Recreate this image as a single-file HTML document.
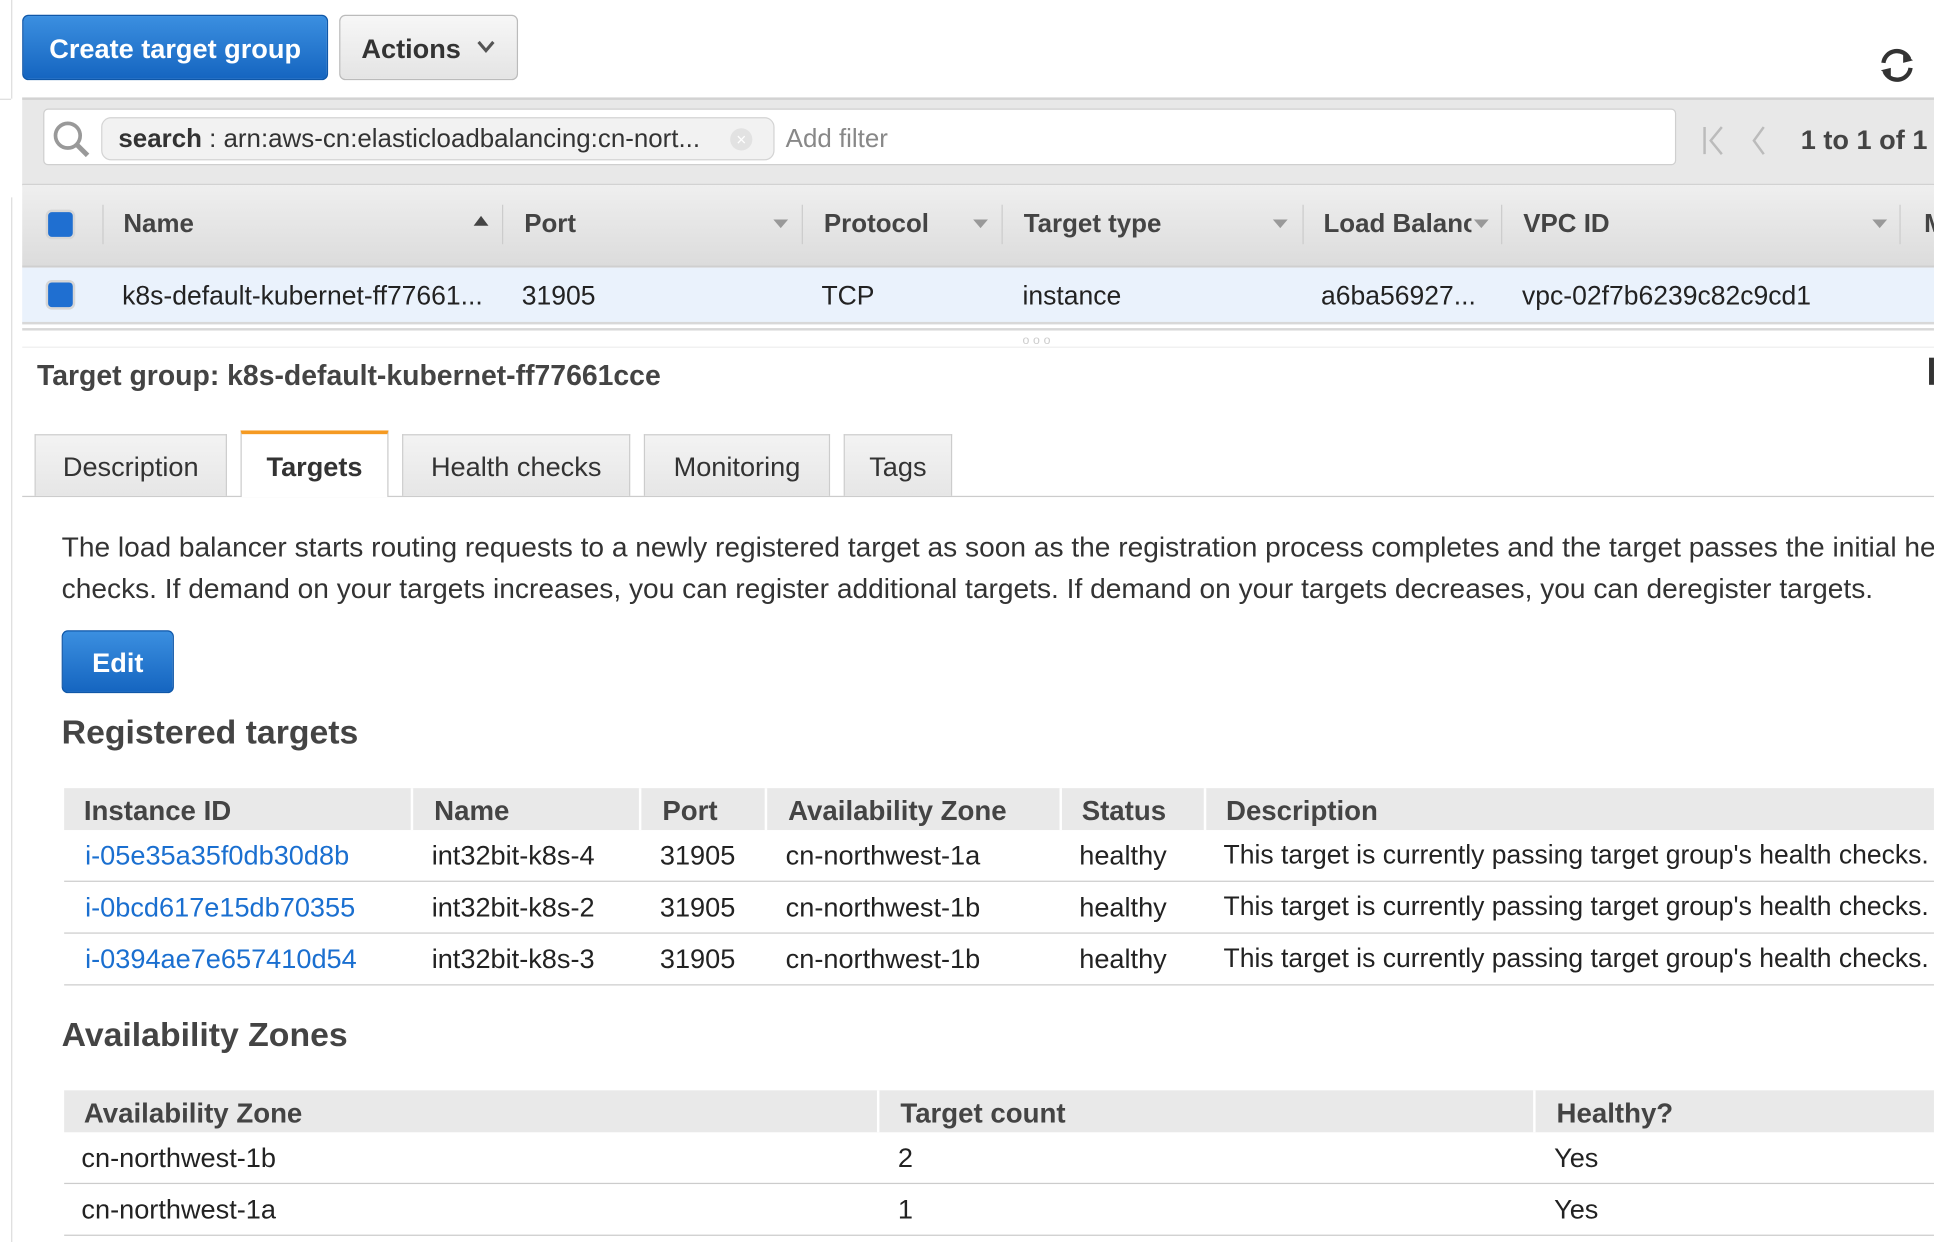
<!DOCTYPE html>
<html><head><meta charset="utf-8">
<style>
html,body{margin:0;padding:0;background:#fff;overflow:hidden;}
body{width:1934px;height:1242px;}
#w{position:absolute;left:0;top:0;width:1568px;height:1007px;transform:scale(1.2334);transform-origin:0 0;font-family:"Liberation Sans",Arial,sans-serif;color:#222;overflow:hidden;}
.a{position:absolute;white-space:nowrap;}
.btnb{background:linear-gradient(#3b8fe0,#1565c0);border:1px solid #0f57a8;border-radius:5px;color:#fff;font-weight:bold;}
.btng{background:linear-gradient(#f7f7f7,#e4e4e4);border:1px solid #bbb;border-radius:5px;color:#333;font-weight:bold;}
.hd{font-size:21px;font-weight:bold;color:#444;}
.th{font-size:22.4px;font-weight:bold;color:#444;}
.cell{font-size:21.5px;color:#222;}
.tc{font-size:22px;color:#222;}
.lnk{color:#1a6fd0;}
.cb{position:absolute;width:20px;height:20px;background:#1f6fd1;border:2px solid #d6d6d6;border-radius:5px;}
.dv{position:absolute;width:1px;background:#ccc;}
.tri{position:absolute;width:0;height:0;border-left:6px solid transparent;border-right:6px solid transparent;border-top:7px solid #999;}
.tab{position:absolute;top:352px;height:50px;background:linear-gradient(#f3f3f3,#e6e6e6);border:1px solid #ccc;border-bottom:none;font-size:22px;color:#333;text-align:center;line-height:52px;box-sizing:border-box;}
</style></head><body><div id="w">
<div class="a" style="left:9px;top:0;width:1px;height:80px;background:#ddd"></div>
<div class="a" style="left:0;top:80px;width:9px;height:1px;background:#ddd"></div>
<div class="a" style="left:9px;top:160px;width:1px;height:847px;background:#ddd"></div>

<div class="a btnb" style="left:18px;top:12px;width:246px;height:51px;font-size:22px;line-height:54px;text-align:center">Create target group</div>
<div class="a btng" style="left:275px;top:12px;width:143px;height:51px;font-size:22px;line-height:54px;"><span style="margin-left:17px">Actions</span>
<svg style="position:absolute;left:111px;top:20px" width="14" height="10"><path d="M1 1 L7 8 L13 1" stroke="#555" stroke-width="2.5" fill="none"/></svg></div>
<svg class="a" style="left:1521px;top:37px" width="34" height="32" viewBox="0 0 34 32"><path d="M6 14 A11 11 0 0 1 27 11" stroke="#333" stroke-width="3.5" fill="none"/><path d="M22 6 L30 12 L22 14Z" fill="#333"/><path d="M28 18 A11 11 0 0 1 7 21" stroke="#333" stroke-width="3.5" fill="none"/><path d="M12 26 L4 20 L12 18Z" fill="#333"/></svg>

<div class="a" style="left:18px;top:79px;width:1550px;height:68px;background:#e8e8e8;border-top:2px solid #d2d2d2;border-bottom:2px solid #d2d2d2"></div>
<div class="a" style="left:35px;top:88px;width:1322px;height:44px;background:#fff;border:1px solid #cfcfcf;border-radius:4px"></div>
<svg class="a" style="left:42px;top:97px" width="32" height="32"><circle cx="13" cy="13" r="10" stroke="#999" stroke-width="3" fill="none"/><path d="M20 20 L29 29" stroke="#999" stroke-width="4"/></svg>
<div class="a" style="left:82px;top:95px;width:544px;height:33px;background:#f2f2f2;border:1px solid #d4d4d4;border-radius:8px"></div>
<div class="a" style="left:96px;top:101px;font-size:21px;color:#333;width:488px;overflow:hidden"><b>search</b> : arn:aws-cn:elasticloadbalancing:cn-nort...</div>
<div class="a" style="left:592px;top:104px;width:18px;height:18px;border-radius:50%;background:#e2e2e2;color:#fff;font-size:14px;text-align:center;line-height:18px">×</div>
<div class="a" style="left:637px;top:101px;font-size:21px;color:#888">Add filter</div>
<svg class="a" style="left:1380px;top:101px" width="60" height="26"><path d="M2 2 V24" stroke="#bbb" stroke-width="2"/><path d="M16 2 L7 13 L16 24" stroke="#bbb" stroke-width="2" fill="none"/><path d="M50 2 L42 13 L50 24" stroke="#bbb" stroke-width="2" fill="none"/></svg>
<div class="a" style="left:1460px;top:101px;font-size:22px;font-weight:bold;color:#444">1 to 1 of 1</div>

<div class="a" style="left:18px;top:150px;width:1550px;height:65px;background:linear-gradient(#efefef,#dcdcdc);border-bottom:2px solid #cfcfcf"></div>
<div class="cb" style="left:37px;top:170px"></div>
<div class="dv" style="left:83px;top:166px;height:32px"></div>
<div class="dv" style="left:407px;top:166px;height:32px"></div>
<div class="dv" style="left:650px;top:166px;height:32px"></div>
<div class="dv" style="left:812px;top:166px;height:32px"></div>
<div class="dv" style="left:1056px;top:166px;height:32px"></div>
<div class="dv" style="left:1217px;top:166px;height:32px"></div>
<div class="dv" style="left:1540px;top:166px;height:32px"></div>
<div class="a hd" style="left:100px;top:170px">Name</div>
<div class="a" style="left:384px;top:175px;width:0;height:0;border-left:6px solid transparent;border-right:6px solid transparent;border-bottom:8px solid #444"></div>
<div class="a hd" style="left:425px;top:170px">Port</div><div class="tri" style="left:627px;top:178px"></div>
<div class="a hd" style="left:668px;top:170px">Protocol</div><div class="tri" style="left:789px;top:178px"></div>
<div class="a hd" style="left:830px;top:170px">Target type</div><div class="tri" style="left:1032px;top:178px"></div>
<div class="a hd" style="left:1073px;top:170px;width:120px;overflow:hidden">Load Balancer</div><div class="tri" style="left:1195px;top:178px"></div>
<div class="a hd" style="left:1235px;top:170px">VPC ID</div><div class="tri" style="left:1518px;top:178px"></div>
<div class="a hd" style="left:1560px;top:170px">M</div>

<div class="a" style="left:18px;top:217px;width:1550px;height:44px;background:#eaf2fc;border-bottom:2px solid #d8d8d8"></div>
<div class="cb" style="left:37px;top:227px"></div>
<div class="a cell" style="left:99px;top:228px">k8s-default-kubernet-ff77661...</div>
<div class="a cell" style="left:423px;top:228px">31905</div>
<div class="a cell" style="left:666px;top:228px">TCP</div>
<div class="a cell" style="left:829px;top:228px">instance</div>
<div class="a cell" style="left:1071px;top:228px">a6ba56927...</div>
<div class="a cell" style="left:1234px;top:228px">vpc-02f7b6239c82c9cd1</div>

<div class="a" style="left:18px;top:266px;width:1550px;height:2px;background:#d8d8d8"></div>
<div class="a" style="left:829px;top:271px;font-size:10px;color:#ccc;letter-spacing:3px">ooo</div>
<div class="a" style="left:18px;top:281px;width:1550px;height:1px;background:#eee"></div>
<div class="a" style="left:1564px;top:290px;width:4px;height:22px;background:#333"></div>

<div class="a" style="left:30px;top:291px;font-size:23px;font-weight:bold;color:#444">Target group: k8s-default-kubernet-ff77661cce</div>

<div class="a" style="left:18px;top:402px;width:1550px;height:1px;background:#ccc"></div>
<div class="tab" style="left:28px;width:156px">Description</div>
<div class="tab" style="left:195px;width:120px;top:349px;height:54px;background:#fff;border-top:3px solid #f59a22;font-weight:bold;line-height:54px">Targets</div>
<div class="tab" style="left:326px;width:185px">Health checks</div>
<div class="tab" style="left:522px;width:151px">Monitoring</div>
<div class="tab" style="left:684px;width:88px">Tags</div>

<div class="a" style="left:50px;top:426px;font-size:22.8px;color:#333;line-height:34px">The load balancer starts routing requests to a newly registered target as soon as the registration process completes and the target passes the initial health<br>checks. If demand on your targets increases, you can register additional targets. If demand on your targets decreases, you can deregister targets.</div>
<div class="a btnb" style="left:50px;top:511px;width:89px;height:49px;font-size:22px;line-height:52px;text-align:center">Edit</div>
<div class="a" style="left:50px;top:578px;font-size:27.4px;font-weight:bold;color:#444">Registered targets</div>

<div class="a" style="left:52px;top:639px;width:1516px;height:34px;background:#e9e9e9"></div>
<div class="dv" style="left:333px;top:639px;height:34px;background:#fff;width:2px"></div>
<div class="dv" style="left:518px;top:639px;height:34px;background:#fff;width:2px"></div>
<div class="dv" style="left:620px;top:639px;height:34px;background:#fff;width:2px"></div>
<div class="dv" style="left:859px;top:639px;height:34px;background:#fff;width:2px"></div>
<div class="dv" style="left:976px;top:639px;height:34px;background:#fff;width:2px"></div>
<div class="a th" style="left:68px;top:645px">Instance ID</div>
<div class="a th" style="left:352px;top:645px">Name</div>
<div class="a th" style="left:537px;top:645px">Port</div>
<div class="a th" style="left:639px;top:645px">Availability Zone</div>
<div class="a th" style="left:877px;top:645px">Status</div>
<div class="a th" style="left:994px;top:645px">Description</div>

<div class="a" style="left:52px;top:714px;width:1516px;height:1px;background:#ccc"></div>
<div class="a" style="left:52px;top:756px;width:1516px;height:1px;background:#ccc"></div>
<div class="a" style="left:52px;top:798px;width:1516px;height:1px;background:#ccc"></div>

<div class="a tc lnk" style="left:69px;top:681px">i-05e35a35f0db30d8b</div>
<div class="a tc" style="left:350px;top:681px">int32bit-k8s-4</div>
<div class="a tc" style="left:535px;top:681px">31905</div>
<div class="a tc" style="left:637px;top:681px">cn-northwest-1a</div>
<div class="a tc" style="left:875px;top:681px">healthy</div>
<div class="a tc" style="left:992px;top:681px;font-size:21.5px">This target is currently passing target group's health checks.</div>

<div class="a tc lnk" style="left:69px;top:723px">i-0bcd617e15db70355</div>
<div class="a tc" style="left:350px;top:723px">int32bit-k8s-2</div>
<div class="a tc" style="left:535px;top:723px">31905</div>
<div class="a tc" style="left:637px;top:723px">cn-northwest-1b</div>
<div class="a tc" style="left:875px;top:723px">healthy</div>
<div class="a tc" style="left:992px;top:723px;font-size:21.5px">This target is currently passing target group's health checks.</div>

<div class="a tc lnk" style="left:69px;top:765px">i-0394ae7e657410d54</div>
<div class="a tc" style="left:350px;top:765px">int32bit-k8s-3</div>
<div class="a tc" style="left:535px;top:765px">31905</div>
<div class="a tc" style="left:637px;top:765px">cn-northwest-1b</div>
<div class="a tc" style="left:875px;top:765px">healthy</div>
<div class="a tc" style="left:992px;top:765px;font-size:21.5px">This target is currently passing target group's health checks.</div>

<div class="a" style="left:50px;top:823px;font-size:27.4px;font-weight:bold;color:#444">Availability Zones</div>
<div class="a" style="left:52px;top:884px;width:1516px;height:34px;background:#e9e9e9"></div>
<div class="dv" style="left:711px;top:884px;height:34px;background:#fff;width:2px"></div>
<div class="dv" style="left:1243px;top:884px;height:34px;background:#fff;width:2px"></div>
<div class="a th" style="left:68px;top:890px">Availability Zone</div>
<div class="a th" style="left:730px;top:890px">Target count</div>
<div class="a th" style="left:1262px;top:890px">Healthy?</div>
<div class="a" style="left:52px;top:959px;width:1516px;height:1px;background:#ccc"></div>
<div class="a" style="left:52px;top:1001px;width:1516px;height:1px;background:#ccc"></div>
<div class="a tc" style="left:66px;top:926px">cn-northwest-1b</div>
<div class="a tc" style="left:728px;top:926px">2</div>
<div class="a tc" style="left:1260px;top:926px">Yes</div>
<div class="a tc" style="left:66px;top:968px">cn-northwest-1a</div>
<div class="a tc" style="left:728px;top:968px">1</div>
<div class="a tc" style="left:1260px;top:968px">Yes</div>
</div></body></html>
